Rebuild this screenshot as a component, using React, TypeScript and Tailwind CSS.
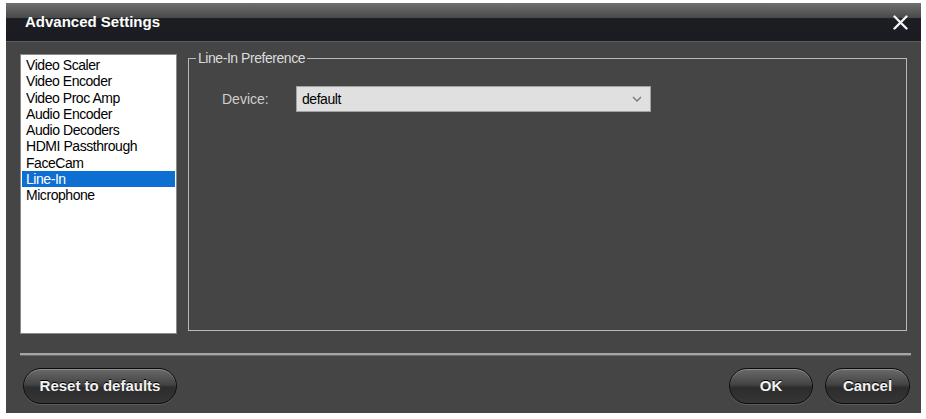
import React from "react";

const items = [
  "Video Scaler",
  "Video Encoder",
  "Video Proc Amp",
  "Audio Encoder",
  "Audio Decoders",
  "HDMI Passthrough",
  "FaceCam",
  "Line-In",
  "Microphone",
];

const narrow = "font-['Liberation_Sans',Arial,sans-serif] text-[14px] tracking-[-0.45px]";
const pill =
  "h-[36px] rounded-full border border-[#0c0c0c] bg-[linear-gradient(to_bottom,#6a6a6a_0%,#444_45%,#2c2c2c_55%,#363636_100%)] shadow-[inset_0_1px_0_rgba(255,255,255,0.25),0_1px_0_rgba(255,255,255,0.12)] text-[15px] font-bold text-[#f2f2f2] [text-shadow:0_-1px_0_#000] font-['Liberation_Sans',Arial,sans-serif]";

const ListBox: React.FC<{ selected: string }> = ({ selected }) => (
  <div className="mt-[4px] h-[280px] w-[157px] shrink-0 border border-[#8a8a8a] bg-white px-[1px] pt-[2px]">
    {items.map((it) => (
      <div
        key={it}
        className={
          narrow +
          " h-[16.3px] pl-[4px] leading-[16px] " +
          (it === selected ? "bg-[#0d6fd2] text-white" : "text-black")
        }
      >
        {it}
      </div>
    ))}
  </div>
);

export default function App() {
  return (
    <div className="h-[419px] w-[926px] bg-white pl-[6px] pt-[3px]">
      <div className="flex h-[410px] w-[915px] flex-col bg-[#454545]">
        <div className="flex h-[39px] shrink-0 items-center justify-between border-b border-[#5c5c5c] bg-[linear-gradient(to_bottom,#707070_0%,#4a4a4a_38%,#1c1e24_41%,#1a1c22_100%)] pl-[19px] pr-[13px]">
          <span className="pt-[1px] font-['Liberation_Sans',Arial,sans-serif] text-[15px] font-bold text-white">
            Advanced Settings
          </span>
          <svg width="15" height="15" viewBox="0 0 15 15" className="mt-[1px]">
            <path d="M1.5 1.5 13.5 13.5M13.5 1.5 1.5 13.5" stroke="#f4f4f4" strokeWidth="2.4" strokeLinecap="round" />
          </svg>
        </div>

        <div className="flex flex-1 flex-col">
          <div className="flex gap-[11px] pl-[14px] pr-[14px] pt-[8px]">
            <ListBox selected="Line-In" />
            <fieldset className="h-[281px] flex-1 border border-[#b9b9b9]">
              <legend className={narrow + " ml-[7px] px-[2px] leading-[16px] text-[#dcdcdc]"}>
                Line-In Preference
              </legend>
              <div className="mt-[20px] flex items-center pl-[33px]">
                <label className="w-[74px] font-['Liberation_Sans',Arial,sans-serif] text-[14px] text-[#cfcfcf]">
                  Device:
                </label>
                <div className="flex h-[26px] w-[355px] items-center justify-between border border-[#a2a2a2] bg-[#e0e0e0] pl-[5px] pr-[8px]">
                  <span className={narrow + " text-black"}>default</span>
                  <svg width="10" height="6" viewBox="0 0 10 6">
                    <path d="M1 1 5 5 9 1" fill="none" stroke="#777" strokeWidth="1.3" />
                  </svg>
                </div>
              </div>
            </fieldset>
          </div>

          <div className="ml-[14px] mr-[10px] mt-[19px] h-[3px] border-b border-[#6a6a6a] bg-[#a5a5a5]" />

          <div className="mt-[12px] flex items-center pl-[17px] pr-[11px]">
            <button className={pill + " w-[154px]"}>Reset to defaults</button>
            <div className="flex-1" />
            <button className={pill + " w-[84px]"}>OK</button>
            <button className={pill + " ml-[12px] w-[85px]"}>Cancel</button>
          </div>
        </div>
      </div>
    </div>
  );
}
